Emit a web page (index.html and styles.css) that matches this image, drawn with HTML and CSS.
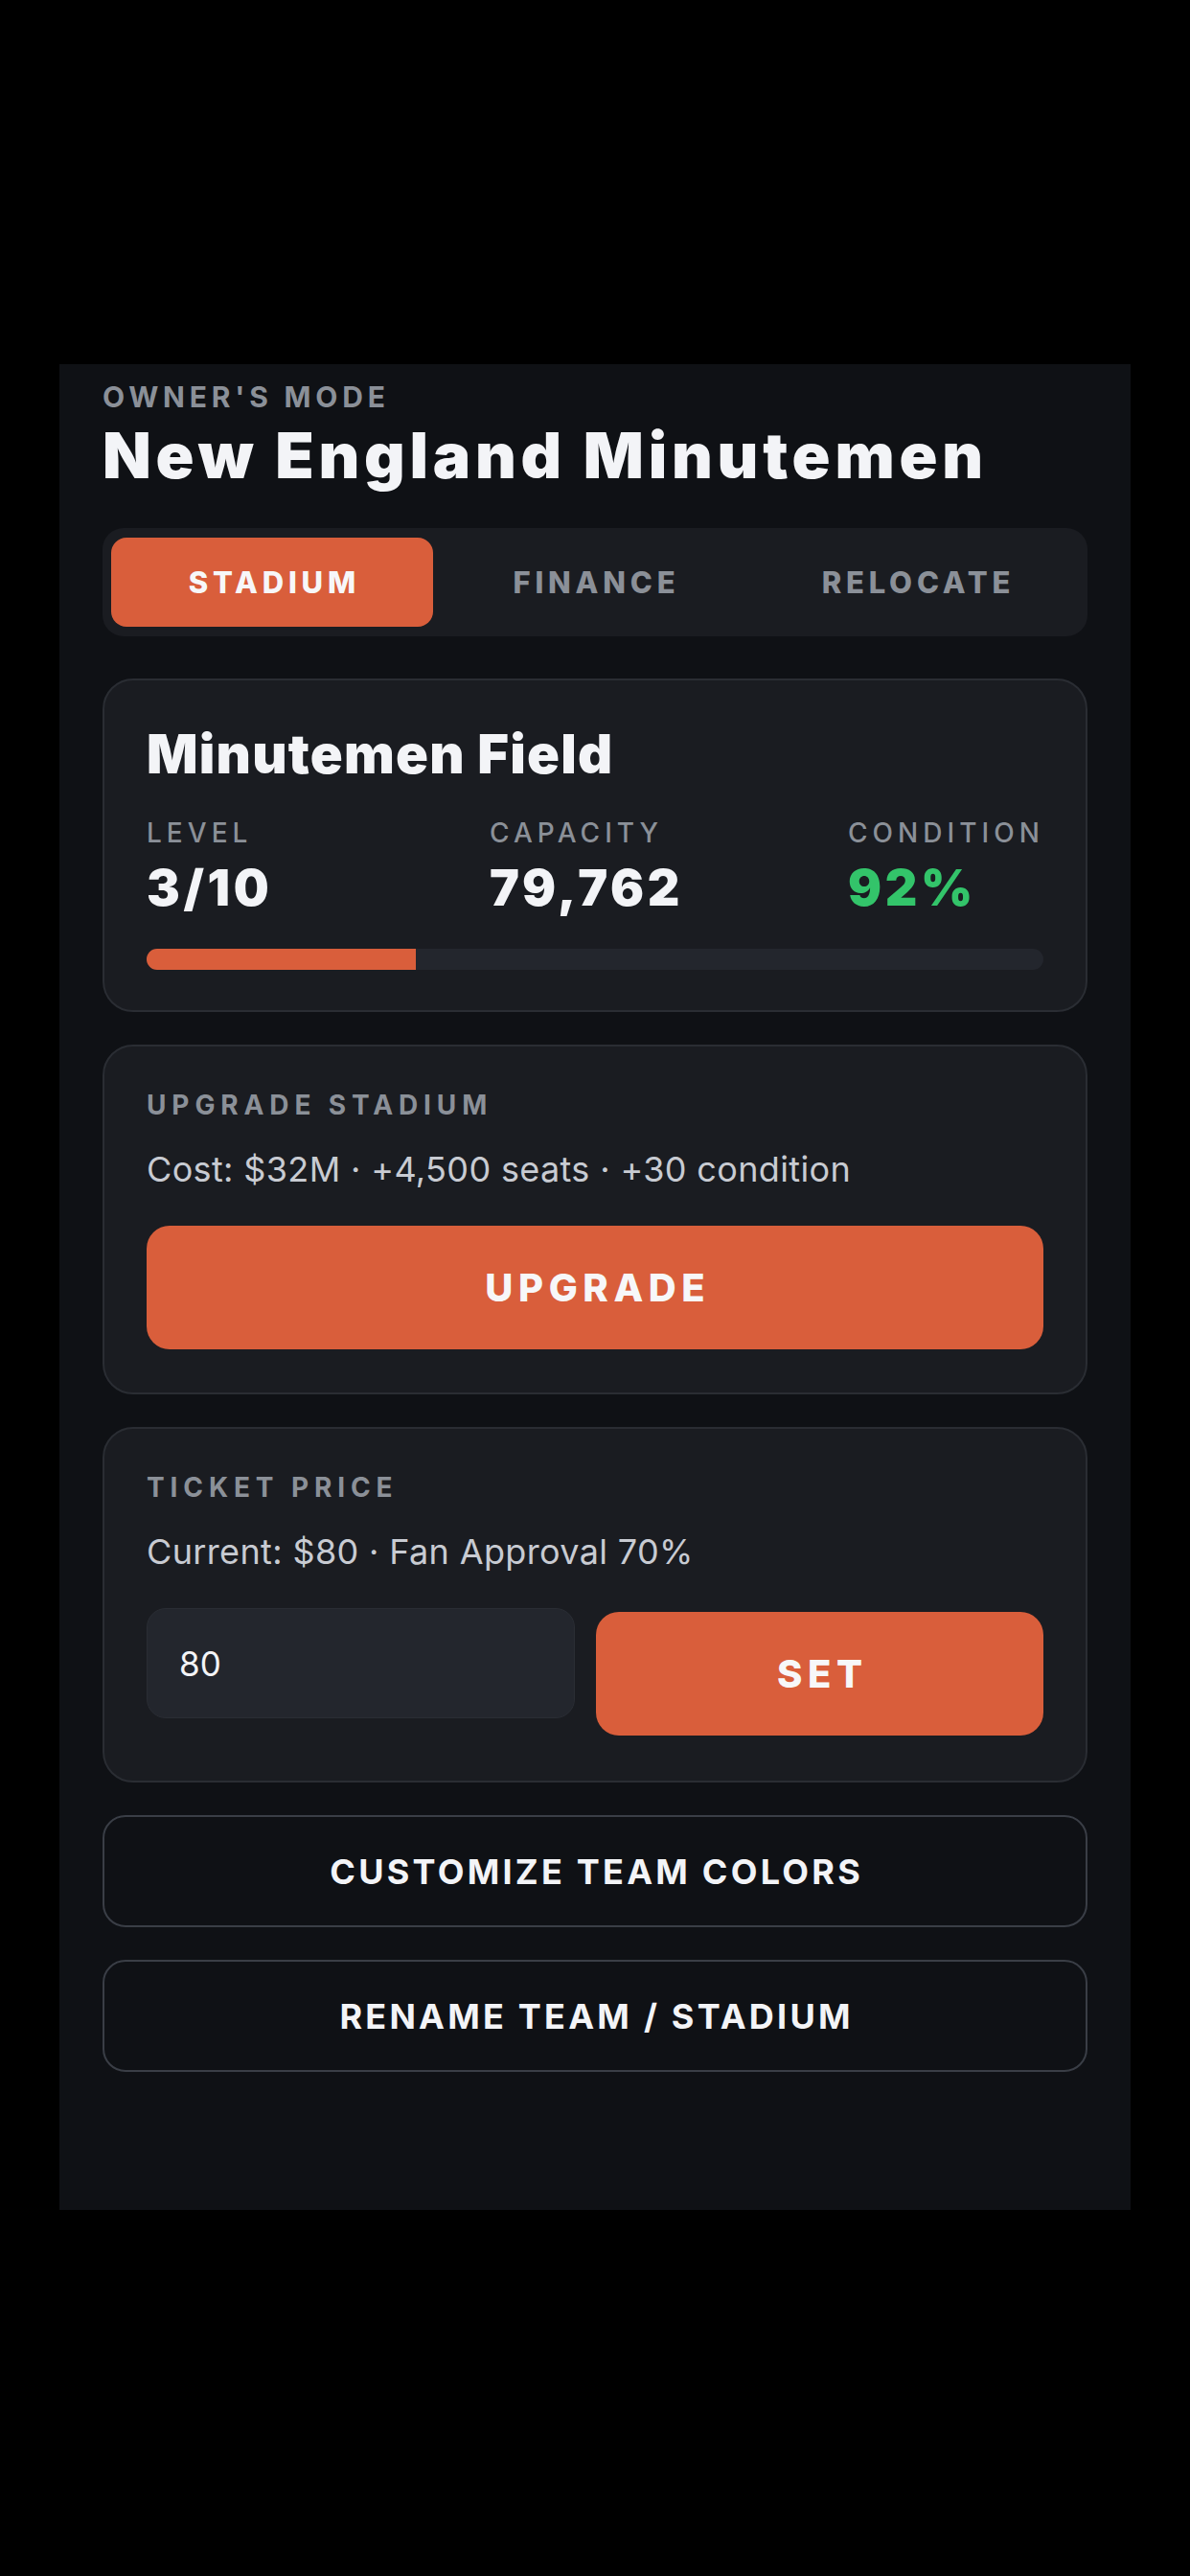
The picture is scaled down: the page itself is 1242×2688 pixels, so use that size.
FILE: index.html
```html
<!DOCTYPE html>
<html lang="en">
<head>
<meta charset="utf-8">
<title>Owner's Mode</title>
<link rel="stylesheet" href="styles.css">
</head>
<body>
<div class="screen">
  <main class="panel">
    <div class="eyebrow">OWNER'S MODE</div>
    <h1 class="team">New England Minutemen</h1>

    <nav class="tabs">
      <div class="tab active">STADIUM</div>
      <div class="tab">FINANCE</div>
      <div class="tab">RELOCATE</div>
    </nav>

    <section class="card card-stadium">
      <h2 class="stadium-name">Minutemen Field</h2>
      <div class="stats">
        <div class="stat">
          <div class="stat-label">LEVEL</div>
          <div class="stat-value">3/10</div>
        </div>
        <div class="stat">
          <div class="stat-label">CAPACITY</div>
          <div class="stat-value">79,762</div>
        </div>
        <div class="stat">
          <div class="stat-label">CONDITION</div>
          <div class="stat-value good">92%</div>
        </div>
      </div>
      <div class="bar"><div class="bar-fill" style="width:30%"></div></div>
    </section>

    <section class="card">
      <div class="section-label">UPGRADE STADIUM</div>
      <p class="info">Cost: $32M · +4,500 seats · +30 condition</p>
      <button class="btn-primary btn-full">UPGRADE</button>
    </section>

    <section class="card card-ticket">
      <div class="section-label">TICKET PRICE</div>
      <p class="info">Current: $80 · Fan Approval 70%</p>
      <div class="price-row">
        <input class="price-input" type="text" value="80">
        <button class="btn-primary btn-set">SET</button>
      </div>
    </section>

    <button class="btn-outline">CUSTOMIZE TEAM COLORS</button>
    <button class="btn-outline">RENAME TEAM / STADIUM</button>
  </main>
</div>
</body>
</html>
```

FILE: styles.css
```css
* {
  box-sizing: border-box;
}

html, body {
  margin: 0;
  padding: 0;
  background: #000000;
}

body {
  font-family: Inter, "Noto Sans", "Liberation Sans", sans-serif;
  color: #f3f4f7;
  width: 1242px;
  height: 2688px;
  overflow: hidden;
}

.screen {
  padding: 380px 62px 0 62px;
}

.panel {
  background: #0f1115;
  width: 1118px;
  height: 1926px;
  padding: 16px 45px 0 45px;
  display: flex;
  flex-direction: column;
}

.eyebrow {
  font-size: 30px;
  line-height: 36px;
  font-weight: 700;
  letter-spacing: 0.16em;
  color: #8b9098;
}

.team {
  margin: 4px 0 0 0;
  font-size: 66px;
  line-height: 79px;
  font-weight: 900;
  letter-spacing: 0.072em;
  color: #f3f4f7;
}

.tabs {
  margin-top: 36px;
  background: #1a1c21;
  border-radius: 22px;
  padding: 10px 11px 10px 9px;
  display: grid;
  grid-template-columns: 1fr 1fr 1fr;
}

.tab {
  height: 93px;
  border-radius: 16px;
  display: flex;
  align-items: center;
  justify-content: center;
  font-size: 31px;
  font-weight: 800;
  letter-spacing: 0.155em;
  color: #8b9098;
  padding-left: 0.155em;
}

.tab.active {
  background: #d95e3b;
  color: #f7f7f9;
}

.card {
  margin-top: 34px;
  background: #1a1c21;
  border: 2px solid #2a2d33;
  border-radius: 32px;
  padding: 44px 44px 45px 44px;
}

.tabs + .card {
  margin-top: 44px;
}

.card-stadium {
  padding-bottom: 42px;
}

.card-ticket {
  padding-bottom: 47px;
}

.stadium-name {
  margin: 0;
  font-size: 56px;
  line-height: 67px;
  font-weight: 900;
  letter-spacing: 0.022em;
  color: #f3f4f7;
}

.stats {
  margin-top: 31px;
  display: grid;
  grid-template-columns: 358px 374px 1fr;
}

.stat-label {
  font-size: 28px;
  line-height: 34px;
  font-weight: 500;
  letter-spacing: 0.18em;
  color: #8b9098;
}

.stat-value {
  margin-top: 10px;
  font-size: 52px;
  line-height: 62px;
  font-weight: 900;
  letter-spacing: 0.07em;
  color: #f3f4f7;
}

.stat-value.good {
  color: #33c46a;
}

.bar {
  margin-top: 32px;
  height: 22px;
  border-radius: 11px;
  background: #23262d;
  overflow: hidden;
}

.bar-fill {
  height: 100%;
  background: #d95e3b;
}

.section-label {
  font-size: 28px;
  line-height: 34px;
  font-weight: 700;
  letter-spacing: 0.21em;
  color: #8b9098;
}

.info {
  margin: 29px 0 0 0;
  font-size: 36px;
  line-height: 43px;
  font-weight: 400;
  letter-spacing: 0.01em;
  color: #c8cbd2;
}

.btn-primary {
  border: none;
  background: #d95e3b;
  color: #f7f7f9;
  font-family: inherit;
  font-size: 40px;
  font-weight: 800;
  letter-spacing: 0.14em;
  border-radius: 24px;
  height: 129px;
  padding: 0 0 0 0.14em;
  cursor: pointer;
}

.btn-full {
  display: block;
  width: 100%;
  margin-top: 37px;
}

.price-row {
  margin-top: 37px;
  display: grid;
  grid-template-columns: 1fr 467px;
  column-gap: 22px;
  align-items: start;
}

.price-input {
  height: 115px;
  width: 100%;
  background: #23262d;
  border: 1px solid #2a2d34;
  border-radius: 20px;
  padding: 0 33px;
  font-family: inherit;
  font-size: 35px;
  color: #f3f4f7;
  outline: none;
}

.btn-set {
  margin-top: 4px;
  width: 100%;
}

.btn-outline {
  margin-top: 34px;
  display: block;
  width: 100%;
  height: 117px;
  background: transparent;
  border: 2px solid #3a3e46;
  border-radius: 24px;
  color: #f3f4f7;
  font-family: inherit;
  font-size: 36px;
  font-weight: 700;
  letter-spacing: 0.09em;
  padding: 0 0 0 0.09em;
  cursor: pointer;
}
```
